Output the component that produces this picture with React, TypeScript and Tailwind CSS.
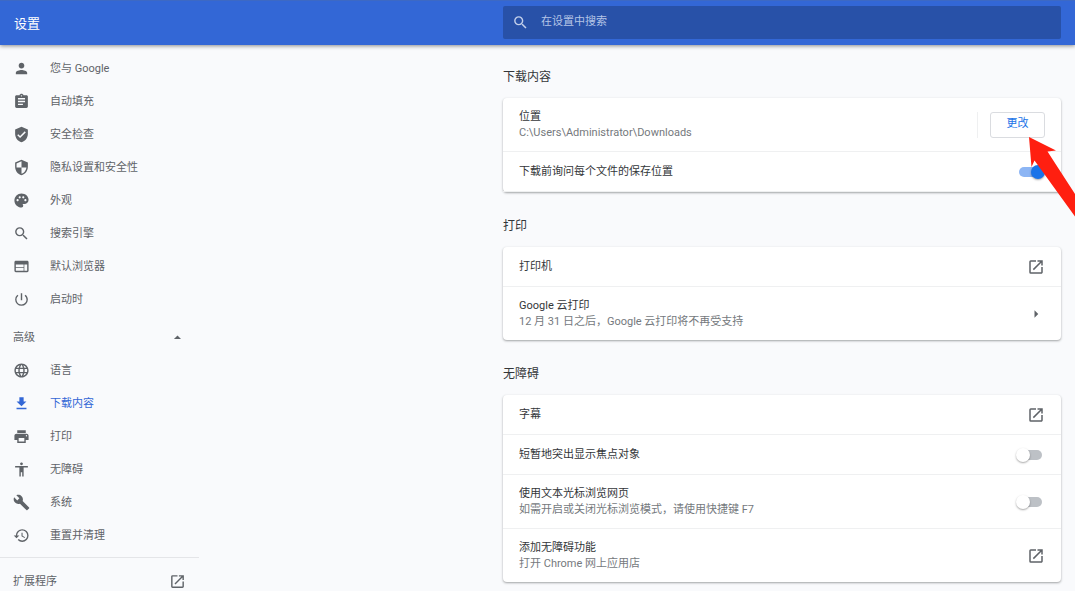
import { useState, type ReactNode } from 'react';
import type { IconType } from 'react-icons';
import {
  MdAccessibility,
  MdArrowDropUp,
  MdArrowRight,
  MdAssignment,
  MdBuild,
  MdFileDownload,
  MdHistory,
  MdLanguage,
  MdOpenInNew,
  MdPalette,
  MdPerson,
  MdPowerSettingsNew,
  MdPrint,
  MdSearch,
  MdSecurity,
  MdVerifiedUser,
  MdWeb,
} from 'react-icons/md';

type NavItem = { label: string; icon: IconType; active?: boolean };

const basicItems: NavItem[] = [
  { label: '您与 Google', icon: MdPerson },
  { label: '自动填充', icon: MdAssignment },
  { label: '安全检查', icon: MdVerifiedUser },
  { label: '隐私设置和安全性', icon: MdSecurity },
  { label: '外观', icon: MdPalette },
  { label: '搜索引擎', icon: MdSearch },
  { label: '默认浏览器', icon: MdWeb },
  { label: '启动时', icon: MdPowerSettingsNew },
];

const advancedItems: NavItem[] = [
  { label: '语言', icon: MdLanguage },
  { label: '下载内容', icon: MdFileDownload, active: true },
  { label: '打印', icon: MdPrint },
  { label: '无障碍', icon: MdAccessibility },
  { label: '系统', icon: MdBuild },
  { label: '重置并清理', icon: MdHistory },
];

function NavList({ items }: { items: NavItem[] }) {
  return (
    <ul>
      {items.map(({ label, icon: Icon, active }) => (
        <li key={label}>
          <a
            href="#"
            className={`flex h-[33px] items-center gap-5 pl-[13px] ${active ? 'text-[#3367d6]' : 'text-[#5f6368]'}`}
          >
            <Icon className="size-[17px]" />
            <span className="pt-0.5">{label}</span>
          </a>
        </li>
      ))}
    </ul>
  );
}

function Section({ title, children }: { title: string; children: ReactNode }) {
  return (
    <section>
      <h2 className="mb-[13px] text-xs leading-4 text-[#333639]">{title}</h2>
      <div className="relative divide-y divide-[#eff0f1] rounded bg-white shadow-[0_1px_2px_rgba(60,64,67,0.35),0_1px_3px_rgba(60,64,67,0.15)]">
        {children}
      </div>
    </section>
  );
}

function Row({ title, note, htmlFor, children }: { title: string; note?: string; htmlFor?: string; children: ReactNode }) {
  return (
    <div className="flex items-center justify-between pr-4 pl-4">
      <div className={note ? 'py-[10px]' : 'py-[11px]'}>
        {htmlFor ? (
          <label htmlFor={htmlFor} className="block leading-[17px] text-[#333639]">{title}</label>
        ) : (
          <div className="leading-[17px] text-[#333639]">{title}</div>
        )}
        {note && <div className="leading-4 text-[#75797d]">{note}</div>}
      </div>
      {children}
    </div>
  );
}

function Toggle({ id, initial = false }: { id: string; initial?: boolean }) {
  const [on, setOn] = useState(initial);

  return (
    <span className="relative flex h-[14px] w-[29px] items-center">
      <input
        id={id}
        type="checkbox"
        role="switch"
        checked={on}
        onChange={() => setOn(!on)}
        className="peer absolute inset-0 z-10 cursor-pointer opacity-0"
      />
      <span className="ml-[3px] h-[10px] w-[23px] rounded-full bg-[#bdc1c6] peer-checked:bg-[#8cb5f4]" />
      <span className="absolute left-0 size-[14px] rounded-full bg-white shadow-[0_1px_2px_rgba(0,0,0,0.35)] peer-checked:left-[15px] peer-checked:bg-[#1a73e8]" />
    </span>
  );
}

function IconButton({ label, icon: Icon }: { label: string; icon: IconType }) {
  return (
    <button aria-label={label} className="text-[#5f6368]">
      <Icon className="size-[18px]" />
    </button>
  );
}

export default function App() {
  return (
    <div className="flex h-screen flex-col overflow-hidden bg-[#f9fafc] font-['Roboto','Noto_Sans_CJK_SC',sans-serif] text-[11px]">
      <header className="z-10 flex h-[45px] shrink-0 items-center justify-between border-t border-[#3d69c4] bg-[#3367d6] pr-[14px] pb-px pl-[14px] shadow-[0_1px_4px_rgba(0,0,0,0.45)]">
        <h1 className="pt-[3px] text-[13px] text-white">设置</h1>
        <label className="flex h-[33px] w-[calc(52vw-1px)] items-center gap-3 rounded-xs bg-[#2851a8] pl-[9px]">
          <MdSearch className="size-[17px] text-[#c3d0eb]" />
          <input
            type="text"
            aria-label="在设置中搜索"
            placeholder="在设置中搜索"
            className="flex-1 bg-transparent text-white outline-none placeholder:text-[#b4c4e6]"
          />
        </label>
      </header>

      <div className="flex min-h-0 flex-1 justify-between">
        <nav className="w-[199px] shrink-0 pt-[7px]">
          <NavList items={basicItems} />
          <button className="mt-[5px] flex h-[33px] w-full items-center justify-between pr-[13px] pl-[13px] text-[#5f6368]">
            <span className="pt-0.5">高级</span>
            <MdArrowDropUp className="size-[17px]" />
          </button>
          <NavList items={advancedItems} />
          <a
            href="#"
            className="mt-[5px] flex items-center justify-between border-t border-[#e4e5e8] pt-[14px] pr-[13px] pl-[13px] text-[#5f6368]"
          >
            <span className="pt-0.5">扩展程序</span>
            <MdOpenInNew className="size-[17px]" />
          </a>
        </nav>

        <main className="mr-[14px] flex w-[calc(52vw-1px)] flex-col gap-[26px] pt-6">
          <Section title="下载内容">
            <Row title="位置" note="C:\Users\Administrator\Downloads">
              <div className="border-l border-[#eff0f1] pl-3">
                <button className="h-[26px] w-[55px] rounded-[3px] border border-[#dadce0] text-[#1a73e8]">更改</button>
              </div>
            </Row>
            <Row title="下载前询问每个文件的保存位置" htmlFor="ask-location">
              <Toggle id="ask-location" initial />
            </Row>
            {/* pointer to the change button */}
            <svg
              viewBox="0 0 47 80"
              className="pointer-events-none absolute top-[39px] -right-[14px] z-20 h-20 w-[47px] border-0"
              aria-hidden="true"
            >
              <path d="M1 0 28 13.5 19.5 14.5 47 57V79.500L6.500 23.500 3.500 30Z" fill="#ff1f10" />
            </svg>
          </Section>

          <Section title="打印">
            <Row title="打印机">
              <IconButton label="打开打印机设置" icon={MdOpenInNew} />
            </Row>
            <Row title="Google 云打印" note="12 月 31 日之后，Google 云打印将不再受支持">
              <IconButton label="Google 云打印" icon={MdArrowRight} />
            </Row>
          </Section>

          <Section title="无障碍">
            <Row title="字幕">
              <IconButton label="打开字幕设置" icon={MdOpenInNew} />
            </Row>
            <Row title="短暂地突出显示焦点对象" htmlFor="focus-highlight">
              <Toggle id="focus-highlight" />
            </Row>
            <Row title="使用文本光标浏览网页" note="如需开启或关闭光标浏览模式，请使用快捷键 F7" htmlFor="caret-browsing">
              <Toggle id="caret-browsing" />
            </Row>
            <Row title="添加无障碍功能" note="打开 Chrome 网上应用店">
              <IconButton label="打开 Chrome 网上应用店" icon={MdOpenInNew} />
            </Row>
          </Section>
        </main>
      </div>
    </div>
  );
}
